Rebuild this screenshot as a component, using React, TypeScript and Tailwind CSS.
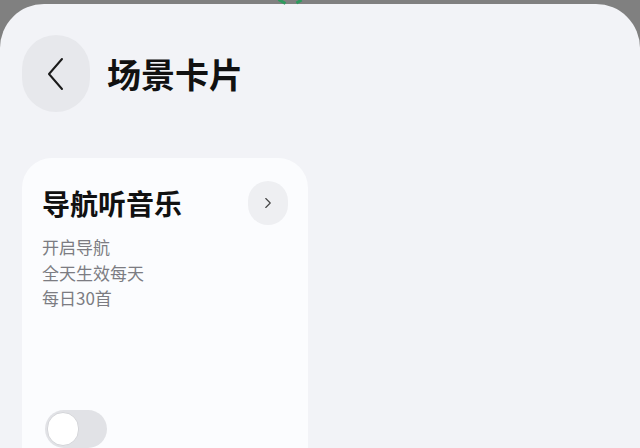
import { ChevronRight } from "lucide-react";

const lines = ["开启导航", "全天生效每天", "每日30首"];

export default function App() {
  return (
    <div
      className="w-[640px] h-[448px] overflow-hidden bg-[#808080] flex flex-col"
      style={{ fontFamily: '"Noto Sans CJK SC", "Noto Sans", sans-serif' }}
    >
      <div className="h-[4px] shrink-0 flex pl-[278px] gap-[10px] items-start">
        <div className="w-[8px] h-[3px] bg-[#2e9a5e] rotate-[30deg]" />
        <div className="w-[6px] h-[3px] bg-[#2e9a5e] -rotate-[30deg]" />
      </div>
      <div className="flex-1 bg-[#f2f3f7] rounded-t-[44px] px-[22px] pt-[31px] flex flex-col">
        <div className="flex items-center gap-[17px]">
          <div className="w-[68px] h-[77px] rounded-full bg-[#e7e8ec] flex items-center justify-center">
            <svg width="20" height="34" viewBox="0 0 20 34" fill="none">
              <path d="M16 2 L3 17 L16 32" stroke="#1a1a1a" strokeWidth="2" strokeLinecap="round" strokeLinejoin="round" />
            </svg>
          </div>
          <div className="text-[34px] font-bold text-[#111] leading-none">场景卡片</div>
        </div>
        <div className="mt-[46px] w-[286px] flex-1 bg-[#fbfcfe] rounded-t-[30px] pl-[20px] pr-[20px] pt-[23px]">
          <div className="flex items-center justify-between">
            <div className="text-[28px] leading-[36px] font-bold text-[#111]">导航听音乐</div>
            <div className="w-[40px] h-[44px] rounded-full bg-[#eeeff2] flex items-center justify-center">
              <ChevronRight size={18} strokeWidth={1.5} className="text-[#444]" />
            </div>
          </div>
          <div className="mt-[9px] flex flex-col text-[17px] leading-[25.5px] text-[#7c7c82]">
            {lines.map((l) => (
              <div key={l}>{l}</div>
            ))}
          </div>
          <div className="mt-[99px] ml-[3px] w-[62px] h-[38px] rounded-full bg-[#e1e2e6] flex items-center pl-[2px]">
            <div className="w-[32px] h-[34px] rounded-full bg-white border border-[#d4d5d9]" />
          </div>
        </div>
      </div>
    </div>
  );
}
